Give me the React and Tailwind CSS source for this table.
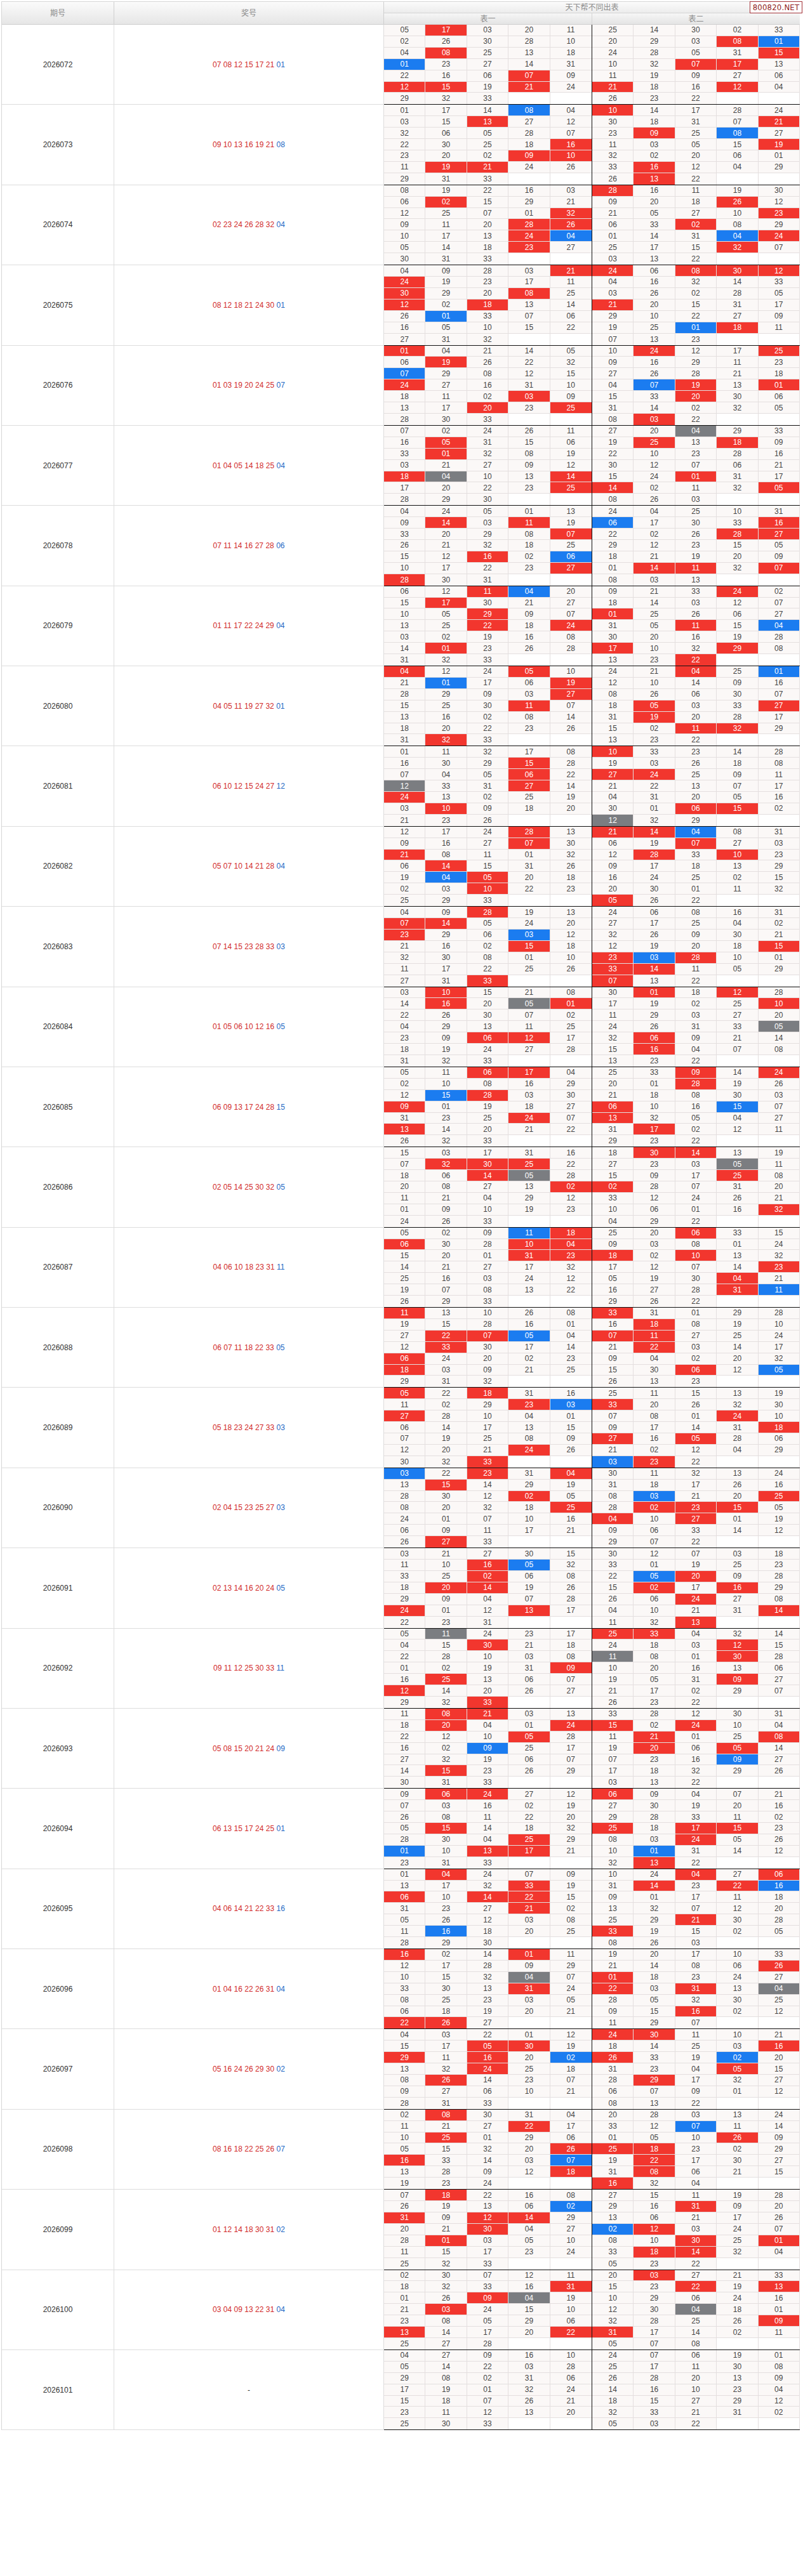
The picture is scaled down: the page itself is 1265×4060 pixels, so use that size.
import React from "react";

const DATA = [
  ["2026072", "07 08 12 15 17 21", "01", "05 17 03 20 11 02 26 30 28 10 04 08 25 13 18 01 23 27 14 31 22 16 06 07 09 12 15 19 21 24 29 32 33", "25 14 30 02 33 20 29 03 08 01 24 28 05 31 15 10 32 07 17 13 11 19 09 27 06 21 18 16 12 04 26 23 22"],
  ["2026073", "09 10 13 16 19 21", "08", "01 17 14 08 04 03 15 13 27 12 32 06 05 28 07 22 30 25 18 16 23 20 02 09 10 11 19 21 24 26 29 31 33", "10 14 17 28 24 30 18 31 07 21 23 09 25 08 27 11 03 05 15 19 32 02 20 06 01 33 16 12 04 29 26 13 22"],
  ["2026074", "02 23 24 26 28 32", "04", "08 19 22 16 03 06 02 15 29 21 12 25 07 01 32 09 11 20 28 26 10 17 13 24 04 05 14 18 23 27 30 31 33", "28 16 11 19 30 09 20 18 26 12 21 05 27 10 23 06 33 02 08 29 01 14 31 04 24 25 17 15 32 07 03 13 22"],
  ["2026075", "08 12 18 21 24 30", "01", "04 09 28 03 21 24 19 23 17 11 30 29 20 08 25 12 02 18 13 14 26 01 33 07 06 16 05 10 15 22 27 31 32", "24 06 08 30 12 04 16 32 14 33 03 26 02 28 05 21 20 15 31 17 29 10 22 27 09 19 25 01 18 11 07 13 23"],
  ["2026076", "01 03 19 20 24 25", "07", "01 04 21 14 05 06 19 26 22 32 07 29 08 12 15 24 27 16 31 10 18 11 02 03 09 13 17 20 23 25 28 30 33", "10 24 12 17 25 09 16 29 11 23 27 26 28 21 18 04 07 19 13 01 15 33 20 30 06 31 14 02 32 05 08 03 22"],
  ["2026077", "01 04 05 14 18 25", "04", "07 02 24 26 11 16 05 31 15 06 33 01 32 08 19 03 21 27 09 12 18 04 10 13 14 17 20 22 23 25 28 29 30", "27 20 04 29 33 19 25 13 18 09 22 10 23 28 16 30 12 07 06 21 15 24 01 31 17 14 02 11 32 05 08 26 03"],
  ["2026078", "07 11 14 16 27 28", "06", "04 24 05 01 13 09 14 03 11 19 33 20 29 08 07 26 21 32 18 25 15 12 16 02 06 10 17 22 23 27 28 30 31", "24 04 25 10 31 06 17 30 33 16 22 02 26 28 27 29 12 23 15 05 18 21 19 20 09 01 14 11 32 07 08 03 13"],
  ["2026079", "01 11 17 22 24 29", "04", "06 12 11 04 20 15 17 30 21 27 10 05 29 09 07 13 25 22 18 24 03 02 19 16 08 14 01 23 26 28 31 32 33", "09 21 33 24 02 18 14 03 12 07 01 25 26 06 27 31 05 11 15 04 30 20 16 19 28 17 10 32 29 08 13 23 22"],
  ["2026080", "04 05 11 19 27 32", "01", "04 12 24 05 10 21 01 17 06 19 28 29 09 03 27 15 25 30 11 07 13 16 02 08 14 18 20 22 23 26 31 32 33", "24 21 04 25 01 12 10 14 09 16 08 26 06 30 07 18 05 03 33 27 31 19 20 28 17 15 02 11 32 29 13 23 22"],
  ["2026081", "06 10 12 15 24 27", "12", "01 11 32 17 08 16 30 29 15 28 07 04 05 06 22 12 33 31 27 14 24 13 02 25 19 03 10 09 18 20 21 23 26", "10 33 23 14 28 19 03 26 18 08 27 24 25 09 11 21 22 13 07 17 04 31 20 05 16 30 01 06 15 02 12 32 29"],
  ["2026082", "05 07 10 14 21 28", "04", "12 17 24 28 13 09 16 27 07 30 21 08 11 01 32 06 14 15 31 26 19 04 05 20 18 02 03 10 22 23 25 29 33", "21 14 04 08 31 06 19 07 27 03 12 28 33 10 23 09 17 18 13 29 16 24 25 02 15 20 30 01 11 32 05 26 22"],
  ["2026083", "07 14 15 23 28 33", "03", "04 09 28 19 13 07 14 05 24 20 23 29 06 03 12 21 16 02 15 18 32 30 08 01 10 11 17 22 25 26 27 31 33", "24 06 08 16 31 27 17 25 04 02 32 26 09 30 21 12 19 20 18 15 23 03 28 10 01 33 14 11 05 29 07 13 22"],
  ["2026084", "01 05 06 10 12 16", "05", "03 10 15 21 08 14 16 20 05 01 22 26 30 07 02 04 29 13 11 25 23 09 06 12 17 18 19 24 27 28 31 32 33", "30 01 18 12 28 17 19 02 25 10 11 29 03 27 20 24 26 31 33 05 32 06 09 21 14 15 16 04 07 08 13 23 22"],
  ["2026085", "06 09 13 17 24 28", "15", "05 11 06 17 04 02 10 08 16 29 12 15 28 03 30 09 01 19 18 27 31 23 25 24 07 13 14 20 21 22 26 32 33", "25 33 09 14 24 20 01 28 19 26 21 18 08 30 03 06 10 16 15 07 13 32 05 04 27 31 17 02 12 11 29 23 22"],
  ["2026086", "02 05 14 25 30 32", "05", "15 03 17 31 16 07 32 30 25 22 18 06 14 05 28 20 08 27 13 02 11 21 04 29 12 01 09 10 19 23 24 26 33", "18 30 14 13 19 27 23 03 05 11 15 09 17 25 08 02 28 07 31 20 33 12 24 26 21 10 06 01 16 32 04 29 22"],
  ["2026087", "04 06 10 18 23 31", "11", "05 02 09 11 18 06 30 28 10 04 15 20 01 31 23 14 21 27 17 32 25 16 03 24 12 19 07 08 13 22 26 29 33", "25 20 06 33 15 09 03 08 01 24 18 02 10 13 32 17 12 07 14 23 05 19 30 04 21 16 27 28 31 11 29 26 22"],
  ["2026088", "06 07 11 18 22 33", "05", "11 13 10 26 08 19 15 28 16 01 27 22 07 05 04 12 33 30 17 14 06 24 20 02 23 18 03 09 21 25 29 31 32", "33 31 01 29 28 16 18 08 19 10 07 11 27 25 24 21 22 03 14 17 09 04 02 20 32 15 30 06 12 05 26 13 23"],
  ["2026089", "05 18 23 24 27 33", "03", "05 22 18 31 16 11 02 29 23 03 27 28 10 04 01 06 14 17 13 15 07 19 25 08 09 12 20 21 24 26 30 32 33", "25 11 15 13 19 33 20 26 32 30 07 08 01 24 10 09 17 14 31 18 27 16 05 28 06 21 02 12 04 29 03 23 22"],
  ["2026090", "02 04 15 23 25 27", "03", "03 22 23 31 04 13 15 14 29 19 28 30 12 02 05 08 20 32 18 25 24 01 07 10 16 06 09 11 17 21 26 27 33", "30 11 32 13 24 31 18 17 26 16 08 03 21 20 25 28 02 23 15 05 04 10 27 01 19 09 06 33 14 12 29 07 22"],
  ["2026091", "02 13 14 16 20 24", "05", "03 21 27 30 15 11 10 16 05 32 33 25 02 06 08 18 20 14 19 26 29 09 04 07 28 24 01 12 13 17 22 23 31", "30 12 07 03 18 33 01 19 25 23 22 05 20 09 28 15 02 17 16 29 26 06 24 27 08 04 10 21 31 14 11 32 13"],
  ["2026092", "09 11 12 25 30 33", "11", "05 11 24 23 17 04 15 30 21 18 22 28 10 03 08 01 02 19 31 09 16 25 13 06 07 12 14 20 26 27 29 32 33", "25 33 04 32 14 24 18 03 12 15 11 08 01 30 28 10 20 16 13 06 19 05 31 09 27 21 17 02 29 07 26 23 22"],
  ["2026093", "05 08 15 20 21 24", "09", "11 08 21 03 13 18 20 04 01 24 22 12 10 05 28 16 02 09 25 17 27 32 19 06 07 14 15 23 26 29 30 31 33", "33 28 12 30 31 15 02 24 10 04 11 21 01 25 08 19 20 06 05 14 07 23 16 09 27 17 18 32 29 26 03 13 22"],
  ["2026094", "06 13 15 17 24 25", "01", "09 06 24 27 12 07 03 16 02 19 26 08 11 22 20 05 15 14 18 32 28 30 04 25 29 01 10 13 17 21 23 31 33", "06 09 04 07 21 27 30 19 20 16 29 28 33 11 02 25 18 17 15 23 08 03 24 05 26 10 01 31 14 12 32 13 22"],
  ["2026095", "04 06 14 21 22 33", "16", "01 04 24 07 09 13 17 32 33 19 06 10 14 22 15 31 23 27 21 02 05 26 12 03 08 11 16 18 20 25 28 29 30", "10 24 04 27 06 31 14 23 22 16 09 01 17 11 18 13 32 07 12 20 25 29 21 30 28 33 19 15 02 05 08 26 03"],
  ["2026096", "01 04 16 22 26 31", "04", "16 02 14 01 11 12 17 28 09 29 10 15 32 04 07 33 30 13 31 24 08 25 23 03 05 06 18 19 20 21 22 26 27", "19 20 17 10 33 21 14 08 06 26 01 18 23 24 27 22 03 31 13 04 28 05 32 30 25 09 15 16 02 12 11 29 07"],
  ["2026097", "05 16 24 26 29 30", "02", "04 03 22 01 12 15 17 05 30 19 29 11 16 20 02 13 32 24 25 18 08 26 14 23 07 09 27 06 10 21 28 31 33", "24 30 11 10 21 18 14 25 03 16 26 33 19 02 20 31 23 04 05 15 28 29 17 32 27 06 07 09 01 12 08 13 22"],
  ["2026098", "08 16 18 22 25 26", "07", "02 08 30 31 04 11 21 27 22 17 10 25 01 29 06 05 15 32 20 26 16 33 14 03 07 13 28 09 12 18 19 23 24", "20 28 03 13 24 33 12 07 11 14 01 05 10 26 09 25 18 23 02 29 19 22 17 30 27 31 08 06 21 15 16 32 04"],
  ["2026099", "01 12 14 18 30 31", "02", "07 18 22 16 08 26 19 13 06 02 31 09 12 14 29 20 21 30 04 27 28 01 03 05 10 11 15 17 23 24 25 32 33", "27 15 11 19 28 29 16 31 09 20 13 06 21 17 26 02 12 03 24 07 08 10 30 25 01 33 18 14 32 04 05 23 22"],
  ["2026100", "03 04 09 13 22 31", "04", "02 30 07 12 11 18 32 33 16 31 01 26 09 04 19 21 03 24 15 10 23 08 05 29 06 13 14 17 20 22 25 27 28", "20 03 27 21 33 15 23 22 19 13 10 29 06 24 16 12 30 04 18 01 32 28 25 26 09 31 17 14 02 11 05 07 08"],
  ["2026101", "", "", "04 27 09 16 10 05 14 22 03 28 29 08 02 31 06 17 19 01 32 24 15 18 07 26 21 23 11 12 13 20 25 30 33", "24 07 06 19 01 25 17 11 30 08 26 28 20 13 09 14 16 10 23 04 18 15 27 29 12 32 33 21 31 02 05 03 22"],
];

const FONT = "[font-family:'Liberation_Sans','Noto_Sans_CJK_SC',Arial,sans-serif]";

function cellClass(n, reds, blue) {
  if (!n) return "bg-white";
  const isRed = reds.includes(n);
  const isBlue = n === blue;
  if (isRed && isBlue) return "bg-[#7b7d81] text-white";
  if (isRed) return "bg-[#f2362e] text-white";
  if (isBlue) return "bg-[#1b7cf0] text-white";
  return "bg-[#fbf8f7] text-[#454545]";
}

function NumTable({ nums, reds, blue, divider }) {
  const cells = [...nums, "", ""];
  return (
    <div
      className={
        "grid grid-cols-5 grid-rows-7 h-full " +
        (divider ? "w-[328px] border-r border-[#111]" : "w-[327px]")
      }
    >
      {cells.map((n, i) => {
        const col = i % 5;
        const row = Math.floor(i / 5);
        const br = divider && col === 4 ? "" : "border-r";
        const bb = row === 6 ? "" : "border-b";
        return (
          <div
            key={i}
            className={
              "flex items-center justify-center text-[12px] leading-none border-[#e4dfdf] " +
              br +
              " " +
              bb +
              " " +
              cellClass(n, reds, blue)
            }
          >
            {n}
          </div>
        );
      })}
    </div>
  );
}

function Block({ row }) {
  const [id, redStr, blue, t1, t2] = row;
  const reds = redStr ? redStr.split(" ") : [];
  return (
    <div className="flex h-[126.38px]">
      <div className="w-[177px] shrink-0 border-r border-b border-[#dddddd] bg-white flex items-center justify-center text-[12px] text-[#333]">
        {id}
      </div>
      <div className="w-[425px] shrink-0 border-r border-b border-[#dddddd] bg-white flex items-center justify-center text-[12px] gap-[3.4px]">
        {reds.length === 0 ? (
          <span className="text-[#333]">-</span>
        ) : (
          <>
            {reds.map((r) => (
              <span key={r} className="text-[#d12a2a]">
                {r}
              </span>
            ))}
            <span className="text-[#2468c4]">{blue}</span>
          </>
        )}
      </div>
      <div className="w-[655px] shrink-0 flex border-b border-[#111]">
        <NumTable nums={t1.split(" ")} reds={reds} blue={blue} divider />
        <NumTable nums={t2.split(" ")} reds={reds} blue={blue} />
      </div>
    </div>
  );
}

export default function App() {
  return (
    <div className={"relative w-[1265px] min-h-[4060px] bg-white pl-[2px] pt-[2px] " + FONT}>
      <div className="w-[1258px] border-l border-t border-[#d6d6d6]">
        {/* header */}
        <div className="flex h-[36px] text-[12px] text-[#8c8c8c]">
          <div className="w-[177px] shrink-0 border-r border-b border-[#cfcfcf] bg-linear-to-b from-[#fbfbfb] to-[#e6e6e6] flex items-center justify-center">
            期号
          </div>
          <div className="w-[425px] shrink-0 border-r border-b border-[#cfcfcf] bg-linear-to-b from-[#fbfbfb] to-[#e6e6e6] flex items-center justify-center">
            奖号
          </div>
          <div className="w-[655px] shrink-0 flex flex-col">
            <div className="h-[18px] border-b border-[#d4d4d4] bg-linear-to-b from-[#fbfbfb] to-[#ececec] flex items-center justify-center">
              天下帮不同出表
            </div>
            <div className="h-[18px] border-b border-[#cfcfcf] flex bg-linear-to-b from-[#f6f6f6] to-[#e4e4e4]">
              <div className="w-[328px] border-r border-[#d4d4d4] flex items-center justify-center">表一</div>
              <div className="w-[327px] flex items-center justify-center">表二</div>
            </div>
          </div>
        </div>
        {/* body */}
        {DATA.map((row) => (
          <Block key={row[0]} row={row} />
        ))}
      </div>
      <div className="absolute top-[2px] right-[1px] w-[83px] h-[19px] border border-[#a4343a] bg-white flex items-center justify-center text-[13px] text-[#8f1d22] [font-family:'Liberation_Sans_Narrow','DejaVu_Sans_Condensed',sans-serif] tracking-[0.2px]">
        800820.NET
      </div>
    </div>
  );
}
